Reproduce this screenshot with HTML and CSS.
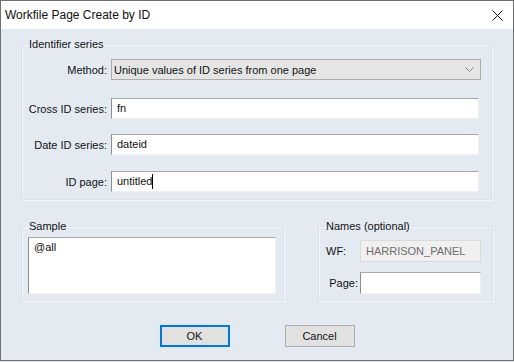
FILE: index.html
```html
<!DOCTYPE html>
<html lang="en">
<head>
    <meta charset="UTF-8">
    <meta name="viewport" content="width=device-width, initial-scale=1.0">
    <title>Workfile Page Create by ID</title>
    <link rel="stylesheet" href="styles.css">
</head>
<body>
    <div class="window">
        <div class="titlebar">
            <span class="title">Workfile Page Create by ID</span>
            <svg class="close" width="11" height="11" viewBox="0 0 11 11">
                <path d="M0.5 0.5 L10.5 10.5 M10.5 0.5 L0.5 10.5" stroke="#1a1a1a" stroke-width="1" fill="none"/>
            </svg>
        </div>
        <div class="content">
            <fieldset class="group ident">
                <legend>Identifier series</legend>
                <div class="row">
                    <label>Method:</label>
                    <div class="select">
                        <span>Unique values of ID series from one page</span>
                        <svg width="9" height="6" viewBox="0 0 9 6">
                            <polyline points="0.5,0.5 4.5,4.5 8.5,0.5" stroke="#808080" stroke-width="1" fill="none"/>
                        </svg>
                    </div>
                </div>
                <div class="row row-cross">
                    <label>Cross ID series:</label>
                    <div class="field">fn</div>
                </div>
                <div class="row row-date">
                    <label>Date ID series:</label>
                    <div class="field">dateid</div>
                </div>
                <div class="row row-page">
                    <label>ID page:</label>
                    <div class="field">untitled<span class="caret"></span></div>
                </div>
            </fieldset>
            <div class="lower">
                <fieldset class="group sample">
                    <legend>Sample</legend>
                    <div class="textarea">@all</div>
                </fieldset>
                <fieldset class="group names">
                    <legend>Names (optional)</legend>
                    <div class="name-row">
                        <label class="wf-label">WF:</label>
                        <div class="field disabled">HARRISON_PANEL</div>
                    </div>
                    <div class="name-row">
                        <label class="page-label">Page:</label>
                        <div class="field"></div>
                    </div>
                </fieldset>
            </div>
            <div class="buttons">
                <button class="default">OK</button>
                <button>Cancel</button>
            </div>
        </div>
    </div>
</body>
</html>
```

FILE: styles.css
```css
body {
    margin: 0;
    background-color: #e4eaf2;
    font-family: "Liberation Sans", Arial, sans-serif;
    font-size: 11px;
    color: #111;
}

.window {
    width: 514px;
    height: 361px;
    box-sizing: border-box;
    border: 1px solid #6f7073;
    background-color: #e4eaf2;
    display: flex;
    flex-direction: column;
}

.titlebar {
    height: 27px;
    background-color: #fff;
    display: flex;
    align-items: center;
    justify-content: space-between;
    padding: 0 10px 1px 4px;
    flex-shrink: 0;
}

.title {
    font-size: 12px;
}

.close {
    display: block;
    margin-top: 2px;
}

.content {
    padding: 0 20px 0 20px;
}

.group {
    margin: 0;
    border: 1px solid #d9e0e9;
    box-shadow: inset 1px 1px 0 #f3f6fa, 1px 1px 0 #f3f6fa;
    box-sizing: border-box;
    min-width: 0;
}

.group legend {
    padding: 0 2px;
    line-height: 14px;
}

.ident {
    margin-top: 8px;
    width: 471px;
    padding: 8px 10px 7px 5px;
}

.row {
    display: grid;
    grid-template-columns: 80px 1fr;
    column-gap: 4px;
    align-items: center;
}

.row label {
    text-align: right;
}

.row-cross {
    margin-top: 18px;
}

.row-date {
    margin-top: 15px;
}

.row-page {
    margin-top: 16px;
}

.select {
    height: 21px;
    box-sizing: border-box;
    border: 1px solid #adadad;
    background-color: #e5e5e5;
    display: flex;
    align-items: center;
    justify-content: space-between;
    padding: 0 6px 0 2px;
}

.field {
    height: 21px;
    box-sizing: border-box;
    background-color: #fff;
    border-style: solid;
    border-width: 1px;
    border-color: #a9a9a9 #eef0f2 #eef0f2 #8e8e8e;
    padding: 0 5px;
    line-height: 19px;
    margin-right: 2px;
    white-space: nowrap;
}

.caret {
    display: inline-block;
    width: 1px;
    height: 15px;
    background-color: #000;
    vertical-align: -4px;
}

.lower {
    display: flex;
    gap: 34px;
    margin-top: 19px;
}

.sample {
    width: 263px;
    padding: 4px 7px 6px 5px;
}

.textarea {
    height: 57px;
    box-sizing: border-box;
    margin-left: 1px;
    background-color: #fff;
    border-style: solid;
    border-width: 1px;
    border-color: #a9a9a9 #eef0f2 #eef0f2 #8e8e8e;
    padding: 3px 5px;
}

.names {
    width: 175px;
    padding: 7px 11px 6px 5px;
}

.name-row {
    display: grid;
    grid-template-columns: 36px 1fr;
    align-items: center;
}

.name-row + .name-row {
    margin-top: 10px;
}

.name-row .field {
    height: 22px;
    line-height: 20px;
    margin-right: 0;
}

.wf-label {
    padding-left: 2px;
}

.page-label {
    text-align: right;
    padding-right: 2px;
}

.field.disabled {
    background-color: #f0f0f0;
    border-color: #d9d9d9;
    color: #6d6d6d;
}

.buttons {
    display: flex;
    justify-content: center;
    gap: 55px;
    margin-top: 24px;
}

button {
    width: 70px;
    height: 22px;
    font-family: inherit;
    font-size: 11px;
    background-color: #e1e1e1;
    border: 1px solid #adadad;
    padding: 0;
    color: #111;
}

button.default {
    border: 2px solid #0078d7;
}
```
